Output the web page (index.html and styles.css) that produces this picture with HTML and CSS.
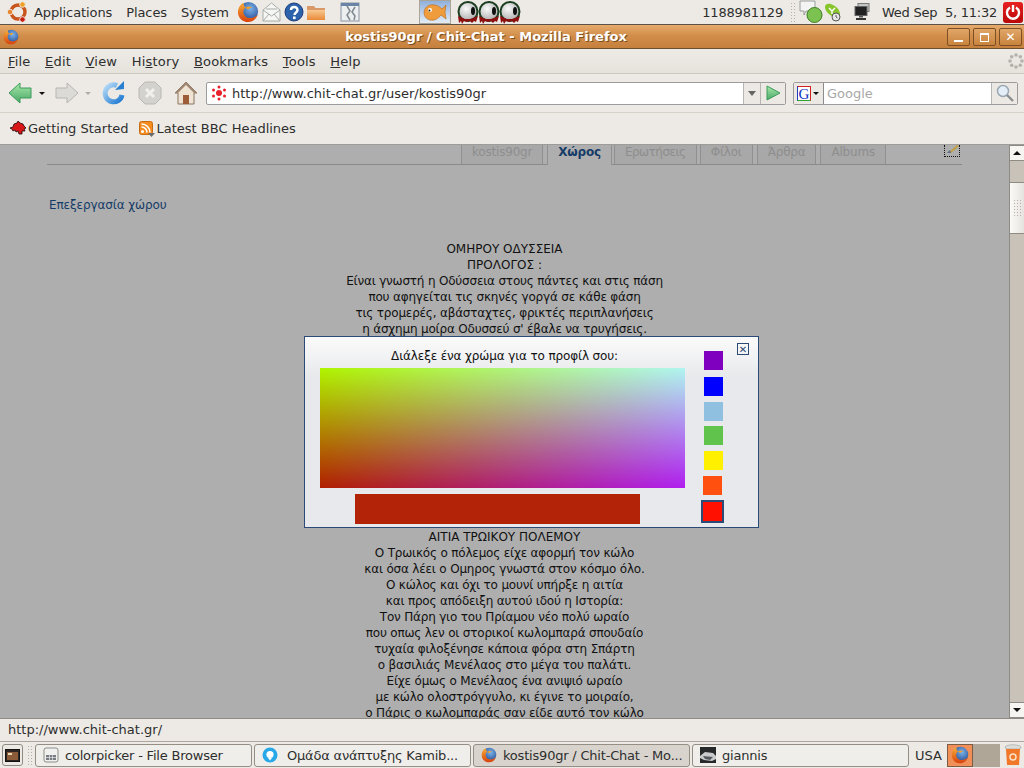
FILE: index.html
```html
<!DOCTYPE html>
<html lang="en">
<head>
    <meta charset="UTF-8">
    <title>kostis90gr / Chit-Chat - Mozilla Firefox</title>
    <link rel="stylesheet" href="styles.css">
</head>
<body>

    <!-- shared icons -->
    <svg class="defs" width="0" height="0">
        <defs>
            <radialGradient id="globe" cx="0.6" cy="0.35" r="0.7">
                <stop offset="0" stop-color="#7cb4e8"/>
                <stop offset="1" stop-color="#1d3f8c"/>
            </radialGradient>
            <radialGradient id="eyeball" cx="0.4" cy="0.35" r="0.7">
                <stop offset="0" stop-color="#fafafa"/>
                <stop offset="1" stop-color="#a8a8a8"/>
            </radialGradient>
            <linearGradient id="orange" x1="0" y1="0" x2="0" y2="1">
                <stop offset="0" stop-color="#f8b038"/>
                <stop offset="1" stop-color="#d8400c"/>
            </linearGradient>
            <linearGradient id="folder" x1="0" y1="0" x2="0" y2="1">
                <stop offset="0" stop-color="#f8c890"/>
                <stop offset="1" stop-color="#e88a38"/>
            </linearGradient>
            <linearGradient id="blue" x1="0" y1="0" x2="1" y2="1">
                <stop offset="0" stop-color="#b8dcf8"/>
                <stop offset="1" stop-color="#1c78d0"/>
            </linearGradient>
            <linearGradient id="green" x1="0" y1="0" x2="0" y2="1">
                <stop offset="0" stop-color="#a8e8a8"/>
                <stop offset="1" stop-color="#48a868"/>
            </linearGradient>
            <symbol id="firefox" viewBox="0 0 24 24">
                <circle cx="12.500" cy="11.500" r="10.500" fill="url(#globe)"/>
                <path d="M7 1.500C3 4 1 8 1 12 1 18.500 6 23 12 23 17 23 21 20 22.500 15 20 18 16 19 13 18.500 9 18 7 15 7 11.500 7 9.500 8 8 9.500 7 8 6 7 4 7 1.500Z" fill="url(#orange)"/>
                <path d="M9.500 7c2-1.500 5-1.500 7 0-2 0-3 1-3.500 2-1.500 0-3-.5-3.500-2z" fill="#f0a030"/>
            </symbol>
            <symbol id="dotlogo" viewBox="0 0 16 16">
                <g fill="#e8202c">
                    <circle cx="8" cy="8" r="3"/>
                    <circle cx="8" cy="2" r="1.500"/>
                    <circle cx="2.500" cy="5" r="1.500"/>
                    <circle cx="13.500" cy="5" r="1.500"/>
                    <circle cx="2.500" cy="11" r="1.500"/>
                    <circle cx="13.500" cy="11" r="1.500"/>
                    <circle cx="8" cy="14" r="1.500"/>
                </g>
            </symbol>
            <symbol id="eye" viewBox="0 0 22 23">
                <circle cx="11" cy="10.500" r="9.500" fill="url(#eyeball)" stroke="#1c3e20" stroke-width="2"/>
                <ellipse cx="16" cy="10" rx="2" ry="4" fill="#111"/>
                <path d="M1 15l1 7 2-2 1 3 2-3 3 1 3-1 2 2 2-2 2 1 2-6-8 3-5 0z" fill="#8c1010"/>
            </symbol>
        </defs>
    </svg>

    <!-- gnome top panel -->
    <div class="panel">
        <svg class="ubuntu" width="22" height="22" viewBox="0 0 22 22">
            <circle cx="11" cy="11" r="7" fill="none" stroke="#c8551c" stroke-width="3.400"/>
            <circle cx="3" cy="11" r="2.800" fill="#e8842c" stroke="#edeae5"/>
            <circle cx="15.500" cy="3.500" r="2.800" fill="#f0a020" stroke="#edeae5"/>
            <circle cx="15.500" cy="18.500" r="2.800" fill="#c81c10" stroke="#edeae5"/>
        </svg>
        <span class="panel-menu first">Applications</span>
        <span class="panel-menu">Places</span>
        <span class="panel-menu">System</span>
        <svg class="launch-ff" width="22" height="22"><use href="#firefox"/></svg>
        <svg class="launch" width="21" height="21" viewBox="0 0 21 21">
            <path d="M2 8l8.500-7 8.500 7v11H2z" fill="#f6f6f4" stroke="#a8aca8"/>
            <path d="M2 8l8.500 6 8.500-6M2 19l6-7M19 19l-6-7M5 7h11" fill="none" stroke="#a8aca8"/>
        </svg>
        <svg class="launch" width="20" height="20" viewBox="0 0 20 20">
            <circle cx="10" cy="10" r="9" fill="#2c62ac" stroke="#1c3c78"/>
            <path d="M7 8c0-4 6.500-4 6.500 0 0 2.500-3 2.500-3 5" fill="none" stroke="#fff" stroke-width="2.400"/>
            <rect x="9" y="14.500" width="2.600" height="2.600" fill="#fff"/>
        </svg>
        <svg class="launch" width="20" height="20" viewBox="0 0 20 20">
            <path d="M1 4h7l1.500 2H19v12H1z" fill="#d89868"/>
            <path d="M1 8h18v10H1z" fill="url(#folder)"/>
        </svg>
        <svg class="launch-note" width="20" height="20" viewBox="0 0 20 20">
            <rect x="1" y="1" width="18" height="18" fill="#eceef0" stroke="#8a94a4"/>
            <rect x="1" y="1" width="18" height="3" fill="#6a84a8"/>
            <path d="M7 4l3 5-3 4 3 5M15 5l-3 5 3 4-1 4" fill="none" stroke="#808890" stroke-width="1.500"/>
        </svg>
        <div class="fish">
            <svg width="26" height="20" viewBox="0 0 26 20">
                <path d="M2 10C3 4 8 2 13 3c3 .5 5 2 7 4l4-4-1 7 1 7-5-4c-3 4-7 6-11 5C4 17 2 14 2 10z" fill="#ee9c3c" stroke="#b8681c" stroke-width=".6"/>
                <circle cx="8" cy="8" r="2" fill="#fff"/>
                <circle cx="7.500" cy="8.500" r="1" fill="#222"/>
            </svg>
        </div>
        <svg class="eye first-eye" width="22" height="23"><use href="#eye"/></svg>
        <svg class="eye" width="22" height="23"><use href="#eye"/></svg>
        <svg class="eye" width="22" height="23"><use href="#eye"/></svg>
        <span class="panel-spacer"></span>
        <span class="panel-text number">1188981129</span>
        <span class="grip panel-grip"></span>
        <svg class="tray-chat" width="24" height="24" viewBox="0 0 24 24">
            <path d="M1 1h15v10H7l-2 4v-4H1z" fill="#f4f4f4" stroke="#989c98"/>
            <circle cx="15.500" cy="15" r="7.500" fill="#7cc250" stroke="#3c7c20"/>
        </svg>
        <svg class="tray-skype" width="18" height="20" viewBox="0 0 18 20">
            <path d="M1 5c0-4 5-4 8-2 4 2 7 5 7 9 0 3-3 5-6 3C5 13 1 9 1 5z" fill="#88c42c"/>
            <path d="M5 6l3 3 3-3M8 9v3" fill="none" stroke="#fff" stroke-width="1.400"/>
            <circle cx="12" cy="15" r="4" fill="#e8e8e8" stroke="#555"/>
            <path d="M12 13v2l1.500 1" fill="none" stroke="#333" stroke-width=".8"/>
        </svg>
        <svg class="tray-net" width="16" height="18" viewBox="0 0 16 18">
            <rect x="4" y="0.500" width="11" height="8" fill="#c4c8c4" stroke="#777"/>
            <rect x="1" y="3.500" width="12" height="9" fill="#222" stroke="#666"/>
            <rect x="5" y="12.500" width="4" height="2" fill="#555"/>
            <rect x="2" y="15" width="10" height="2" fill="#333"/>
        </svg>
        <span class="panel-text clock">Wed Sep &nbsp;5, 11:32</span>
        <div class="power">
            <svg width="16" height="16" viewBox="0 0 16 16">
                <path d="M5 3.500a6 6 0 1 0 6 0" fill="none" stroke="#fff" stroke-width="2.400"/>
                <path d="M8 1v7" stroke="#fff" stroke-width="2.400"/>
            </svg>
        </div>
    </div>

    <!-- firefox window -->
    <div class="titlebar">
        <svg class="title-icon" width="16" height="16"><use href="#firefox"/></svg>
        <span class="title-text">kostis90gr / Chit-Chat - Mozilla Firefox</span>
        <div class="win-buttons">
            <div class="win-btn"><span class="win-min"></span></div>
            <div class="win-btn"><span class="win-max"></span></div>
            <div class="win-btn"><span class="win-close">✕</span></div>
        </div>
    </div>

    <div class="menubar">
        <span class="menu-item"><u>F</u>ile</span>
        <span class="menu-item"><u>E</u>dit</span>
        <span class="menu-item"><u>V</u>iew</span>
        <span class="menu-item">Hi<u>s</u>tory</span>
        <span class="menu-item"><u>B</u>ookmarks</span>
        <span class="menu-item"><u>T</u>ools</span>
        <span class="menu-item"><u>H</u>elp</span>
        <span class="menu-spacer"></span>
        <svg class="throbber" width="16" height="16" viewBox="0 0 16 16">
            <g fill="#b4b2ac">
                <circle cx="8" cy="2" r="1.800"/><circle cx="12.300" cy="3.700" r="1.800"/>
                <circle cx="14" cy="8" r="1.800"/><circle cx="12.300" cy="12.300" r="1.800"/>
                <circle cx="8" cy="14" r="1.800"/><circle cx="3.700" cy="12.300" r="1.800"/>
                <circle cx="2" cy="8" r="1.800"/><circle cx="3.700" cy="3.700" r="1.800"/>
            </g>
        </svg>
    </div>

    <div class="navbar">
        <svg class="nav-back" width="24" height="24" viewBox="0 0 24 24">
            <path d="M1 12L12 2v5h11v10H12v5z" fill="url(#green)" stroke="#3c9a5c"/>
        </svg>
        <span class="drop dark back-drop"></span>
        <svg class="nav-forward" width="24" height="24" viewBox="0 0 24 24">
            <path d="M23 12L12 2v5H1v10h11v5z" fill="#dcdad6" stroke="#b8b6b2"/>
        </svg>
        <span class="drop forward-drop"></span>
        <svg class="nav-reload" width="24" height="24" viewBox="0 0 24 24">
            <path d="M20 14a8.500 8.500 0 1 1-5-9.500" fill="none" stroke="url(#blue)" stroke-width="5"/>
            <path d="M13 9l9-1V0z" fill="#2a80d0"/>
        </svg>
        <svg class="nav-stop" width="24" height="24" viewBox="0 0 24 24">
            <path d="M7 1h10l6 6v10l-6 6H7l-6-6V7z" fill="#d4d2ce" stroke="#bab8b4"/>
            <path d="M8 8l8 8M16 8l-8 8" stroke="#f2f0ec" stroke-width="3"/>
        </svg>
        <svg class="nav-home" width="24" height="24" viewBox="0 0 24 24">
            <path d="M12 1L1 12h3v11h16V12h3z" fill="#efe4d4" stroke="#8c7460"/>
            <path d="M12 1L1 12h3l8-8 8 8h3z" fill="#a08874"/>
            <rect x="9" y="14" width="6" height="9" fill="#9c5c38"/>
        </svg>
        <div class="urlbar">
            <svg class="fav" width="16" height="16"><use href="#dotlogo"/></svg>
            <span class="url-text">http://www.chit-chat.gr/user/kostis90gr</span>
            <span class="url-drop"><span class="drop grey"></span></span>
            <span class="url-go">
                <svg width="16" height="16" viewBox="0 0 16 16"><path d="M2 1l13 7-13 7z" fill="url(#green)" stroke="#3c9a5c"/></svg>
            </span>
        </div>
        <div class="searchbar">
            <span class="engine">
                <span class="engine-g">G</span>
                <span class="drop dark"></span>
            </span>
            <span class="search-text">Google</span>
            <span class="search-go">
                <svg width="18" height="18" viewBox="0 0 18 18">
                    <circle cx="7" cy="7" r="5.500" fill="#e4eef8" stroke="#9aa8b4" stroke-width="1.500"/>
                    <path d="M11 11l6 6" stroke="#8a8e90" stroke-width="2.400"/>
                </svg>
            </span>
        </div>
    </div>

    <div class="bookmarks">
        <span class="bookmark">
            <svg width="16" height="16" viewBox="0 0 16 16">
                <path d="M0 7l3-1 1-3 3-1 1-2 2 2 3 1 1 2 2 2-2 1 1 2-3 0 0 3-3 0-1-3-2 1-1-2-2 1-1-2z" fill="#d81818" stroke="#200808" stroke-width=".8"/>
            </svg>
            Getting Started
        </span>
        <span class="bookmark">
            <svg width="16" height="16" viewBox="0 0 16 16">
                <rect x="0.500" y="0.500" width="13" height="13" rx="2" fill="#f48c20" stroke="#c86c14"/>
                <circle cx="3.500" cy="10.500" r="1.500" fill="#fff"/>
                <path d="M2.500 6a5.500 5.500 0 0 1 5.500 5.500M2.500 3a8.500 8.500 0 0 1 8.500 8.500" fill="none" stroke="#fff" stroke-width="1.500"/>
                <path d="M9 12h7l-3.500 4z" fill="#6c6c6c"/>
            </svg>
            Latest BBC Headlines
        </span>
    </div>

    <div class="viewport">
        <div class="page">
            <div class="tabs">
                <span class="tab">kostis90gr</span>
                <span class="tab active">Χώρος</span>
                <span class="tab tab-questions">Ερωτήσεις</span>
                <span class="tab tab-friends">Φίλοι</span>
                <span class="tab">Άρθρα</span>
                <span class="tab">Albums</span>
                <span class="tab-edit">
                    <svg width="14" height="8" viewBox="0 0 14 8"><path d="M3 8L12 0l2 1-8 7z" fill="#c0a040"/><path d="M2 8h4l-1-3z" fill="#5c6c88"/></svg>
                </span>
            </div>
            <a class="edit-link" href="#">Επεξεργασία χώρου</a>
            <div class="poem">
                <p class="caps">ΟΜΗΡΟΥ ΟΔΥΣΣΕΙΑ</p>
                <p class="caps">ΠΡΟΛΟΓΟΣ :</p>
                <p>Είναι γνωστή η Οδύσσεια στους πάντες και στις πάση</p>
                <p>που αφηγείται τις σκηνές γοργά σε κάθε φάση</p>
                <p>τις τρομερές, αβάσταχτες, φρικτές περιπλανήσεις</p>
                <p>η άσχημη μοίρα Οδυσσεύ σ' έβαλε να τρυγήσεις.</p>
            </div>
            <div class="poem poem-next">
                <p class="caps">ΑΙΤΙΑ ΤΡΩΙΚΟΥ ΠΟΛΕΜΟΥ</p>
                <p>Ο Τρωικός ο πόλεμος είχε αφορμή τον κώλο</p>
                <p>και όσα λέει ο Ομηρος γνωστά στον κόσμο όλο.</p>
                <p>Ο κώλος και όχι το μουνί υπήρξε η αιτία</p>
                <p>και προς απόδειξη αυτού ιδού η Ιστορία:</p>
                <p>Τον Πάρη γιο του Πρίαμου νέο πολύ ωραίο</p>
                <p>που οπως λεν οι στορικοί κωλομπαρά σπουδαίο</p>
                <p>τυχαία φιλοξένησε κάποια φόρα στη Σπάρτη</p>
                <p>ο βασιλιάς Μενέλαος στο μέγα του παλάτι.</p>
                <p>Είχε όμως ο Μενέλαος ένα ανιψιό ωραίο</p>
                <p>με κώλο ολοστρόγγυλο, κι έγινε το μοιραίο,</p>
                <p>ο Πάρις ο κωλομπαράς σαν είδε αυτό τον κώλο</p>
            </div>
        </div>
        <div class="scrollbar">
            <span class="sb-btn"><span class="sb-up"></span></span>
            <span class="sb-track"></span>
            <span class="sb-thumb"><span class="grip sb-grip"></span></span>
            <span class="sb-track fill"></span>
            <span class="sb-btn"><span class="sb-down"></span></span>
        </div>
    </div>

    <div class="statusbar">http://www.chit-chat.gr/</div>

    <!-- gnome bottom panel -->
    <div class="taskbar">
        <div class="show-desktop">
            <svg width="15" height="13" viewBox="0 0 15 13">
                <rect x="0.500" y="0.500" width="14" height="12" fill="#2c2420" stroke="#111"/>
                <rect x="2" y="3" width="11" height="8" fill="#8c5c38"/>
                <rect x="3" y="4" width="4" height="2" fill="#e8d8b8"/>
            </svg>
        </div>
        <span class="grip task-grip"></span>
        <div class="task">
            <svg width="16" height="16" viewBox="0 0 16 16">
                <rect x="1" y="1" width="14" height="14" rx="2" fill="#f0f0ee" stroke="#8c8c88"/>
                <rect x="3" y="8" width="10" height="5" fill="#787c80"/>
                <path d="M3 10.500h10M6.500 8v5M9.500 8v5" stroke="#e8e8e8" stroke-width=".7"/>
            </svg>
            <span class="task-label">colorpicker - File Browser</span>
        </div>
        <div class="task">
            <svg width="16" height="16" viewBox="0 0 16 16">
                <circle cx="8" cy="8" r="7.500" fill="#28a8e8"/>
                <circle cx="8" cy="7.500" r="3.600" fill="#fff"/>
                <path d="M6 11h4l-2 2.500z" fill="#fff"/>
            </svg>
            <span class="task-label gap">Ομάδα ανάπτυξης Kamib...</span>
        </div>
        <div class="task active">
            <svg width="16" height="16"><use href="#firefox"/></svg>
            <span class="task-label">kostis90gr / Chit-Chat - Mo...</span>
        </div>
        <div class="task">
            <svg width="16" height="16" viewBox="0 0 16 16">
                <rect width="16" height="16" fill="#26282a"/>
                <path d="M0 9l5-4 8 1 3 3v3l-4 2-8-1-4-2z" fill="#c8cacc"/>
                <path d="M3 9l10 1-3 3-5-1z" fill="#54585c"/>
            </svg>
            <span class="task-label">giannis</span>
        </div>
        <span class="usa">USA</span>
        <div class="workspace-on"><svg width="18" height="18"><use href="#firefox"/></svg></div>
        <div class="workspace-off"></div>
        <svg class="trash" width="18" height="24" viewBox="0 0 18 24">
            <path d="M1 4c2-3 14-3 16 0l-1 2H2z" fill="#dcdcd8" stroke="#a8a8a4" stroke-width=".7"/>
            <path d="M2 6h14l-1 16H3z" fill="#f07828"/>
            <circle cx="9" cy="14" r="3" fill="none" stroke="#fbe0c8" stroke-width="1.500"/>
        </svg>
    </div>

    <!-- colour picker popup -->
    <div class="picker">
        <div class="picker-main">
            <div class="picker-title">Διάλεξε ένα χρώμα για το προφίλ σου:</div>
            <div class="picker-field"></div>
            <div class="picker-preview"></div>
        </div>
        <div class="picker-side">
            <span class="picker-close">✕</span>
            <span class="swatch purple"></span>
            <span class="swatch blue"></span>
            <span class="swatch sky"></span>
            <span class="swatch green"></span>
            <span class="swatch yellow"></span>
            <span class="swatch orange"></span>
            <span class="swatch red selected"></span>
        </div>
    </div>

</body>
</html>
```

FILE: styles.css
```css
body {
    font-family: 'DejaVu Sans', sans-serif;
    font-size: 13px;
    color: #2e2e2e;
    background-color: #edeae5;
    margin: 0;
    padding: 0;
    width: 1024px;
    height: 768px;
    overflow: hidden;
    display: flex;
    flex-direction: column;
}

.defs {
    position: absolute;
}

svg {
    display: block;
    flex: none;
}

.grip {
    display: block;
    background-image: radial-gradient(#b4b0a8 1px, transparent 1px);
    background-size: 3px 3px;
}

/* top panel */
.panel {
    height: 24px;
    display: flex;
    align-items: center;
    padding-left: 7px;
    border-bottom: 1px solid #5c5248;
    flex: none;
}

.panel-menu {
    margin-left: 14px;
    white-space: nowrap;
    letter-spacing: -0.1px;
}

.panel-menu.first {
    margin-left: 5px;
}

.launch-ff {
    margin-left: 8px;
}

.launch {
    margin-left: 2px;
}

.launch-note {
    margin-left: 14px;
}

.fish {
    width: 30px;
    height: 22px;
    margin-left: 59px;
    display: flex;
    align-items: center;
    justify-content: center;
    background: linear-gradient(#8fb0dc, #e2ecf6);
    border: 1px solid #aaa498;
}

.eye {
    margin-right: -1px;
}

.first-eye {
    margin-left: 6px;
}

.panel-spacer {
    flex: 1;
}

.panel-text {
    white-space: nowrap;
}

.number {
    letter-spacing: -0.2px;
}

.panel-grip {
    width: 6px;
    height: 21px;
    margin-left: 7px;
}

.tray-chat {
    margin-left: 3px;
}

.tray-skype {
    margin-left: 1px;
}

.tray-net {
    margin-left: 12px;
}

.clock {
    margin-left: 12px;
    letter-spacing: -0.25px;
}

.power {
    width: 20px;
    height: 21px;
    margin: 0 1px 0 6px;
    display: flex;
    align-items: center;
    justify-content: center;
    background: linear-gradient(#e82020, #b80808);
    border-radius: 3px;
}

/* title bar */
.titlebar {
    height: 23px;
    position: relative;
    display: flex;
    align-items: center;
    background: linear-gradient(#e6aa6c, #d08c48 50%, #c4803c);
    border-bottom: 1px solid #6e4f30;
    flex: none;
}

.title-icon {
    margin-left: 3px;
}

.title-text {
    flex: 1;
    text-align: center;
    margin-left: -19px;
    padding-right: 52px;
    font-weight: bold;
    color: #fff;
    text-shadow: 1px 1px 0 #7a4c1c;
}

.win-buttons {
    position: absolute;
    right: 2px;
    top: 3px;
    display: flex;
    gap: 3px;
}

.win-btn {
    width: 21px;
    height: 16px;
    display: flex;
    align-items: center;
    justify-content: center;
    border: 1px solid #7c5024;
    border-radius: 2px;
    background: linear-gradient(#e2a668, #c8843e);
}

.win-min {
    width: 9px;
    height: 2px;
    margin-top: 8px;
    background-color: #fff;
}

.win-max {
    width: 7px;
    height: 6px;
    border: 1px solid #fff;
    border-top-width: 2px;
}

.win-close {
    color: #fff;
    font-size: 12px;
    font-weight: bold;
    line-height: 16px;
}

/* menu */
.menubar {
    height: 24px;
    display: flex;
    align-items: center;
    padding-left: 8px;
    gap: 14.5px;
    letter-spacing: 0.2px;
    background: linear-gradient(#eeebe6, #e6e3dd);
    border-bottom: 1px solid #cdc9c2;
    flex: none;
}

.menu-spacer {
    flex: 1;
}

/* navigation */
.navbar {
    height: 38px;
    display: flex;
    align-items: center;
    padding-left: 8px;
    border-bottom: 1px solid #d6d2ca;
    flex: none;
}

.drop {
    display: block;
    width: 0;
    height: 0;
    border-left: 3px solid transparent;
    border-right: 3px solid transparent;
    border-top: 3px solid #b0aea8;
}

.drop.dark {
    border-top-color: #111;
}

.drop.grey {
    border-left-width: 4px;
    border-right-width: 4px;
    border-top: 5px solid #666;
}

.back-drop {
    margin-left: 7px;
}

.forward-drop {
    margin-left: 6px;
}

.nav-forward {
    margin-left: 10px;
}

.nav-reload {
    margin-left: 11px;
}

.nav-stop,
.nav-home {
    margin-left: 12px;
}

.urlbar {
    width: 578px;
    height: 21px;
    margin-left: 8px;
    display: flex;
    align-items: center;
    background-color: #fff;
    border: 1px solid #9c9c9c;
    border-radius: 2px;
    flex: none;
}

.fav {
    margin-left: 4px;
}

.url-text {
    flex: 1;
    margin-left: 5px;
}

.url-drop {
    width: 16px;
    height: 21px;
    display: flex;
    align-items: center;
    justify-content: center;
    background-color: #ece9e4;
    border-left: 1px solid #b8b6b2;
}

.url-go {
    width: 24px;
    height: 21px;
    display: flex;
    align-items: center;
    justify-content: center;
    background-color: #ece9e4;
    border-left: 1px solid #b8b6b2;
}

.searchbar {
    width: 223px;
    height: 21px;
    margin-left: 7px;
    display: flex;
    align-items: center;
    background-color: #fff;
    border: 1px solid #9c9c9c;
    border-radius: 2px;
    flex: none;
}

.engine {
    width: 30px;
    height: 21px;
    display: flex;
    align-items: center;
    gap: 2px;
    padding-left: 3px;
    box-sizing: border-box;
    background-color: #ece9e4;
    border-right: 1px solid #8c8c8c;
}

.engine-g {
    width: 14px;
    height: 15px;
    font-family: 'Liberation Serif', serif;
    font-size: 15px;
    line-height: 15px;
    text-align: center;
    color: #1030c0;
    background-color: #fff;
    border: 1px solid #d02020;
    border-left-color: #2040c0;
    border-bottom-color: #30a030;
    box-sizing: border-box;
}

.search-text {
    flex: 1;
    margin-left: 3px;
    color: #a8a8a8;
}

.search-go {
    width: 25px;
    height: 21px;
    display: flex;
    align-items: center;
    justify-content: center;
    background-color: #ece9e4;
    border-left: 1px solid #b8b6b2;
}

/* bookmarks */
.bookmarks {
    height: 31px;
    display: flex;
    align-items: center;
    padding-left: 10px;
    gap: 10px;
    flex: none;
}

.bookmark {
    display: flex;
    align-items: center;
    gap: 2px;
}

/* page */
.viewport {
    flex: 1;
    display: flex;
    min-height: 0;
    background-color: #aeaeae;
    border-top: 1px solid #9e9c98;
}

.page {
    flex: 1;
    overflow: hidden;
    font-size: 12px;
    color: #111;
}

.tabs {
    height: 19px;
    margin: 0 47px;
    padding-left: 414px;
    position: relative;
    display: flex;
    gap: 4px;
    letter-spacing: -0.2px;
    border-bottom: 1px solid #8a8a8a;
}

.tab {
    height: 19px;
    padding: 0 10px;
    line-height: 15px;
    box-sizing: border-box;
    color: #8e8e8e;
    background-color: #a8a8a8;
    border: 1px solid #909090;
    border-top: none;
    border-bottom: none;
}

.tab.active {
    height: 20px;
    font-weight: bold;
    color: #153c68;
    background-color: #aeaeae;
}

.tab-questions {
    margin-left: -2px;
    letter-spacing: -0.5px;
}

.tab-friends {
    margin-left: -1px;
}

.tab-edit {
    position: absolute;
    left: 897px;
    top: 0;
    width: 16px;
    height: 12px;
    border: 1px dotted #111;
    border-top: none;
    box-sizing: border-box;
}

.edit-link {
    display: block;
    margin: 32px 0 0 49px;
    color: #153c68;
    text-decoration: none;
    line-height: 16px;
    letter-spacing: -0.1px;
}

.poem {
    margin-top: 28px;
    text-align: center;
}

.poem p {
    margin: 0;
    line-height: 16px;
    letter-spacing: -0.19px;
}

.poem p.caps {
    letter-spacing: 0;
}

.poem-next {
    margin-top: 192px;
}

/* scrollbar */
.scrollbar {
    width: 15px;
    display: flex;
    flex-direction: column;
    flex: none;
    border-left: 1px solid #8e8a84;
    box-sizing: border-box;
}

.sb-btn {
    height: 16px;
    display: flex;
    align-items: center;
    justify-content: center;
    background-color: #f6f5f2;
    border-bottom: 1px solid #8e8a84;
    border-top: 1px solid #8e8a84;
    box-sizing: border-box;
    flex: none;
}

.sb-up {
    border-left: 4px solid transparent;
    border-right: 4px solid transparent;
    border-bottom: 4px solid #111;
}

.sb-down {
    border-left: 4px solid transparent;
    border-right: 4px solid transparent;
    border-top: 4px solid #111;
}

.sb-track {
    height: 21px;
    background-color: #c8c2b8;
    flex: none;
}

.sb-track.fill {
    height: auto;
    flex: 1;
}

.sb-thumb {
    height: 52px;
    display: flex;
    align-items: center;
    justify-content: center;
    background: linear-gradient(to right, #fbfaf8, #e6e3de);
    border-top: 1px solid #8e8a84;
    border-bottom: 1px solid #8e8a84;
    box-sizing: border-box;
    flex: none;
}

.sb-grip {
    width: 9px;
    height: 18px;
}

/* status bar */
.statusbar {
    height: 24px;
    padding-left: 8px;
    line-height: 22px;
    border-top: 1px solid #8e8a84;
    border-bottom: 1px solid #aca69c;
    box-sizing: border-box;
    flex: none;
}

/* bottom panel */
.taskbar {
    height: 26px;
    display: flex;
    align-items: center;
    padding-left: 2px;
    flex: none;
}

.show-desktop {
    width: 21px;
    height: 22px;
    display: flex;
    align-items: center;
    justify-content: center;
    border: 1px solid #8e8a84;
    border-radius: 3px;
    box-sizing: border-box;
}

.task-grip {
    width: 6px;
    height: 21px;
    margin: 0 2px 0 4px;
}

.task {
    width: 217px;
    height: 23px;
    margin-right: 2px;
    padding-left: 7px;
    display: flex;
    align-items: center;
    gap: 6px;
    box-sizing: border-box;
    background-color: #f0eeea;
    border: 1px solid #948e84;
    border-radius: 3px;
    white-space: nowrap;
    flex: none;
}

.task.active {
    background-color: #d8d4cd;
}

.task-label {
    letter-spacing: -0.2px;
}

.task-label.gap {
    margin-left: 3px;
}

.usa {
    margin-left: 4px;
}

.workspace-on {
    width: 26px;
    height: 23px;
    margin-left: 5px;
    display: flex;
    align-items: center;
    justify-content: center;
    box-sizing: border-box;
    background-color: #f09058;
    border: 1px solid #7c5c44;
}

.workspace-off {
    width: 27px;
    height: 23px;
    background-color: #b0a698;
}

.trash {
    margin-left: 4px;
}

/* colour picker */
.picker {
    position: absolute;
    left: 304px;
    top: 336px;
    width: 455px;
    height: 192px;
    display: flex;
    box-sizing: border-box;
    background: linear-gradient(#fbfbfb, #e8e9ec 40px);
    border: 1px solid #2b4a75;
    color: #111;
    font-size: 12px;
}

.picker-main {
    width: 396px;
    padding-left: 15px;
    box-sizing: border-box;
}

.picker-title {
    width: 365px;
    height: 31px;
    padding-left: 4px;
    box-sizing: border-box;
    line-height: 39px;
    letter-spacing: -0.14px;
    text-align: center;
}

.picker-field {
    width: 365px;
    height: 120px;
    background-color: #b00000;
    background-image: linear-gradient(to right, #000, #0000f0), linear-gradient(to top, #001e00, #00f500);
    background-blend-mode: screen;
}

.picker-preview {
    width: 285px;
    height: 30px;
    margin: 6px 0 0 35px;
    background-color: #b32307;
}

.picker-side {
    position: relative;
    flex: 1;
    display: flex;
    flex-direction: column;
    align-items: flex-start;
    padding: 14px 0 0 3px;
}

.picker-close {
    position: absolute;
    left: 36px;
    top: 6px;
    width: 12px;
    height: 12px;
    font-size: 10px;
    line-height: 11px;
    text-align: center;
    box-sizing: border-box;
    border: 1px solid #2b4a75;
    color: #2b4a75;
}

.swatch {
    display: block;
    width: 19px;
    height: 19px;
    margin-bottom: 6px;
}

.swatch.purple { background-color: #8000c0; margin-bottom: 7px; }
.swatch.blue { background-color: #0000ff; }
.swatch.sky { background-color: #90c0e0; margin-bottom: 5px; }
.swatch.green { background-color: #60c44c; }
.swatch.yellow { background-color: #fff000; }
.swatch.orange { background-color: #ff5010; margin-left: -1px; }
.swatch.red { background-color: #ff1000; }

.swatch.selected {
    width: 23px;
    height: 23px;
    margin: -1px 0 0 -3px;
    box-sizing: border-box;
    border: 2px solid #2b4a75;
}
```
